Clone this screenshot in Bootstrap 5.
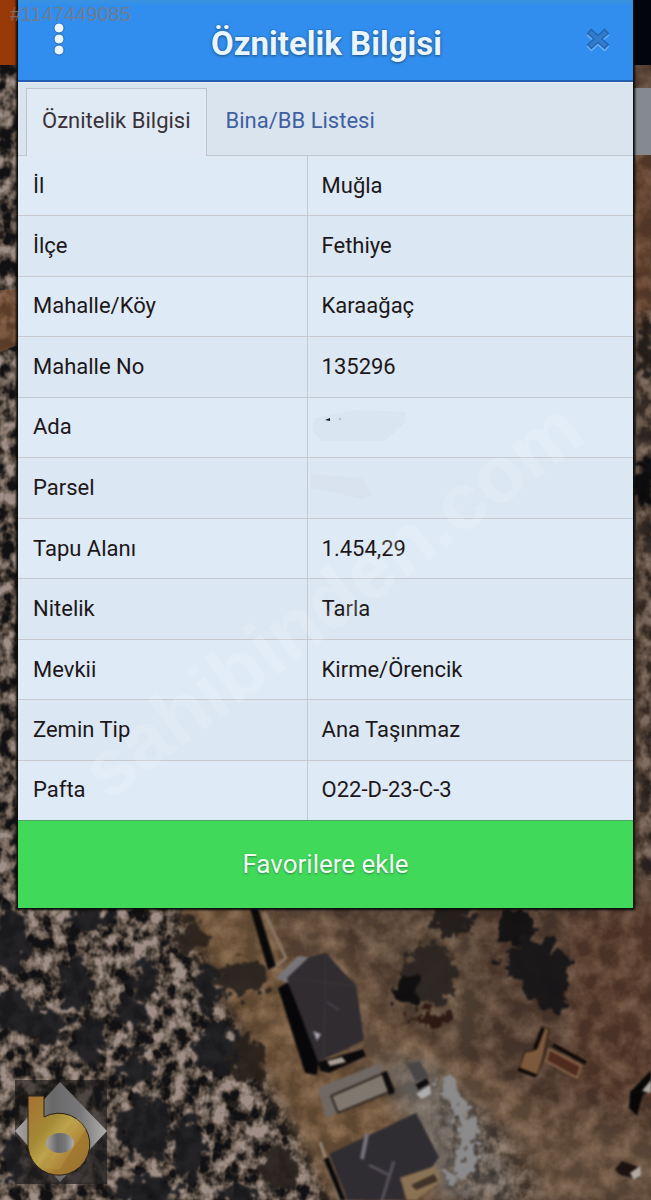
<!DOCTYPE html>
<html lang="tr">
<head>
<meta charset="utf-8">
<meta name="viewport" content="width=device-width, initial-scale=1">
<title>Öznitelik Bilgisi</title>
<link rel="stylesheet" href="https://cdn.jsdelivr.net/npm/bootstrap@5.3.0/dist/css/bootstrap.min.css">
<style>
  body { font-family: Roboto, sans-serif; font-size: 22px; line-height: 28px; background: #4f3d32; color: #1d1719; }
  .stage { min-height: 100vh; padding: 0 18px; overflow: hidden; }
  .terrain { position: absolute; inset: 0; width: 100%; height: 100%; }
  .panel { box-shadow: 0 0 2px 2px #0a0c0a; background: #deeaf6; }
  .panel-head { background: linear-gradient(#3b93dd 0, #318eee 6px); border-bottom: 2px solid #245fae; height: 82px; padding: 4px 22px 0 32px; }
  .panel-title { font-size: 33px; line-height: 40px; padding-top: 4px; font-weight: 700; color: #e9f6ff; text-shadow: 0 0 2px #24588f, 0 1px 3px #24588f; }
  .icon-btn { background: none; border: 0; padding: 0; line-height: 0; }
  .panel-tabs { background: #d9e4ef; border-bottom: 1px solid #bfc7d0; padding: 5px 8px 0; height: 74px; border-top: 1px solid #e8edf5; }
  .panel-tabs .nav-link { border-radius: 0; color: #3f5f9f; padding: 19px 16px 20px 19px; border: 0; line-height: 28px; }
  .panel-tabs .nav-link.active { background: #e0eaf5; color: #3a3238; padding: 18px 15px 21px; border: solid #bcc5ce; border-width: 1px 1px 0; }
  .facts { height: 664px; table-layout: fixed; }
  .facts th, .facts td { font-weight: 400; padding: 0 14px; vertical-align: middle; border-bottom: 1px solid #c6c9d0; }
  .facts th { width: 47%; padding-left: 15px; }
  .facts td { border-left: 1px solid #c6c9d0; }
  .facts tr:nth-child(even) { background: #dbe7f3; }
  .facts tr:last-child > * { border-bottom: 0; }
  .fav { background: #40d95a; color: #effff0; border: 0; border-top: 1px solid #4ba566; height: 88px; font-size: 26px; padding-bottom: 3px; text-shadow: 0 1px 2px #38834a; }
  .overlay-art { position: absolute; inset: 0; width: 100%; height: 100%; pointer-events: none; }
  .ad-no { position: absolute; left: 10px; top: 1px; font: 20px/26px "Liberation Sans", sans-serif; color: rgba(128, 119, 117, .8); }
</style>
</head>
<body>
<main class="stage position-relative">
  <svg class="terrain" viewBox="0 0 651 1200" preserveAspectRatio="xMidYMin slice" aria-hidden="true">
    <defs>
      <filter id="rocks" x="0" y="0" width="100%" height="100%" color-interpolation-filters="sRGB">
        <feTurbulence type="fractalNoise" baseFrequency=".075 .065" numOctaves="3" seed="12"/>
        <feColorMatrix values="2.6 0 0 0 -.82  2.6 0 0 0 -.82  2.6 0 0 0 -.82  0 0 0 0 1"/>
        <feComponentTransfer result="n">
          <feFuncR type="table" tableValues=".07 .15 .29 .42 .52 .62"/>
          <feFuncG type="table" tableValues=".07 .13 .25 .37 .46 .56"/>
          <feFuncB type="table" tableValues=".08 .12 .22 .33 .42 .53"/>
        </feComponentTransfer>
        <feGaussianBlur in="SourceAlpha" stdDeviation="8" result="a"/>
        <feComposite in="n" in2="a" operator="in"/>
      </filter>
      <filter id="grain" x="0" y="0" width="100%" height="100%" color-interpolation-filters="sRGB">
        <feTurbulence type="fractalNoise" baseFrequency=".05" numOctaves="4" seed="5"/>
        <feColorMatrix values="1.8 0 0 0 -.55  1.6 0 0 0 -.53  1.4 0 0 0 -.5  0 0 0 0 .2"/>
      </filter>
      <filter id="rough" x="-20%" y="-20%" width="140%" height="140%" color-interpolation-filters="sRGB">
        <feTurbulence type="fractalNoise" baseFrequency=".09" numOctaves="3" seed="3"/>
        <feDisplacementMap in="SourceGraphic" scale="32" xChannelSelector="R" yChannelSelector="G"/>
        <feGaussianBlur stdDeviation="1.2"/>
      </filter>
      <filter id="soft" color-interpolation-filters="sRGB"><feGaussianBlur stdDeviation="9"/></filter>
      <filter id="edge" color-interpolation-filters="sRGB"><feGaussianBlur stdDeviation=".8"/></filter>
    </defs>
    <rect width="651" height="1200" fill="#554034"/>
    <g filter="url(#soft)">
      <path d="M630 150h21v180h-21z" fill="#6f4732"/>
      <path d="M160 890h100l80 160 130 150H300L240 1040z" fill="#765a3f"/>
      <path d="M305 890l80 130 90 50 100 60 90 10v60H500l-90-80-60-50-70-170z" fill="#6e5745"/>
      <path d="M340 900l130 0 20 90-20 60-60-30z" fill="#5f4c3d"/>
      <path d="M570 920l90-20v210l-90-20z" fill="#5c3f31"/>
      <path d="M380 1060l50 0 60 70 30 70H440z" fill="#77716b"/>
    </g>
    <path d="M312 905l72 112 82 60 80 40 105 16" fill="none" stroke="#84684d" stroke-width="14" opacity=".4" filter="url(#soft)"/>
    <rect width="651" height="1200" filter="url(#grain)"/>
    <path d="M-30-30H30V880H165l38 80 52 100 40 70 50 100H-30z" filter="url(#rocks)"/>
    <path d="M636 310h40v570h-40z" filter="url(#rocks)" opacity=".6"/>
    <path d="M430 1090l45 10 45 45 30 60h-90z" filter="url(#rocks)" opacity=".45"/>
    <path d="M0 290h18v55L0 352z" fill="#7a4e31" opacity=".7"/>
    <g filter="url(#rough)" fill="#1b1b1e" opacity=".92">
      <ellipse cx="12" cy="940" rx="17" ry="32"/><ellipse cx="12" cy="1010" rx="20" ry="22"/>
      <ellipse cx="75" cy="985" rx="14" ry="27"/><ellipse cx="42" cy="1027" rx="24" ry="17"/>
      <ellipse cx="90" cy="1040" rx="16" ry="24"/><ellipse cx="130" cy="1012" rx="18" ry="15"/>
      <ellipse cx="144" cy="980" rx="13" ry="20"/><ellipse cx="136" cy="1070" rx="18" ry="16"/>
      <ellipse cx="145" cy="1128" rx="26" ry="32"/><ellipse cx="188" cy="1148" rx="18" ry="30"/>
      <ellipse cx="145" cy="1190" rx="35" ry="15"/><ellipse cx="208" cy="988" rx="14" ry="26"/>
      <ellipse cx="244" cy="978" rx="24" ry="19" fill="#29231f"/><ellipse cx="216" cy="1048" rx="22" ry="26"/>
      <ellipse cx="248" cy="1060" rx="17" ry="24" fill="#28201a"/><ellipse cx="277" cy="1168" rx="19" ry="22" fill="#28221e"/>
      <ellipse cx="240" cy="1195" rx="20" ry="10"/><ellipse cx="12" cy="1160" rx="10" ry="23"/>
      <ellipse cx="192" cy="938" rx="13" ry="20" fill="#2b221c"/><ellipse cx="90" cy="918" rx="24" ry="12"/>
      <ellipse cx="430" cy="975" rx="27" ry="32" fill="#2a2421"/><ellipse cx="408" cy="990" rx="13" ry="16" fill="#0b0b0d"/>
      <ellipse cx="430" cy="1019" rx="19" ry="7" fill="#2a1610"/>
      <ellipse cx="452" cy="920" rx="22" ry="16" fill="#201c1a"/><ellipse cx="516" cy="926" rx="21" ry="17" fill="#0f0f10"/>
      <path d="M502 957l30-24 30 16 10 32-8 32-22-2-20-26-18-14z" fill="#151417"/>
      <ellipse cx="647" cy="485" rx="12" ry="26" fill="#08090b"/><ellipse cx="646" cy="350" rx="9" ry="30" fill="#211b18"/>
    </g>
    <g filter="url(#edge)">
      <path d="M250 908h8l18 58-8 4z" fill="#0a090a"/>
      <path d="M264 912l22 46-10 8" fill="none" stroke="#8a7765" stroke-width="3"/>
      <path d="M276 978l22-22 14 2-17 21 4 10z" fill="#77757a"/>
      <path d="M278 988l10-6 31 78-2 15-12-2z" fill="#070709"/>
      <path d="M287 978l22-21 17-4 18 20 12 12 8 55-22 11-24 11z" fill="#302c30"/>
      <path d="M326 956l-2 108M287 978l69 8" stroke="#3b373b" stroke-width="1" fill="none"/>
      <path d="M313 1031l8 3-4 7zM327 1002l12 8" fill="#aaa8b4" stroke="#625a65"/>
      <path d="M318 1062l45-13 3 7-37 17-9-2z" fill="#0c090a"/>
      <path d="M327 1061l15-4 4 5-16 4z" fill="#aaa096"/>
      <path d="M318 1088l62-25 14 26-68 29z" fill="#706963"/>
      <path d="M331 1096l55-24 8 18-56 23z" fill="#80776e" stroke="#302822" stroke-width="2"/>
      <path d="M384 1072l8 22M417 1087l11-6" stroke="#0d0b0b" stroke-width="6"/>
      <path d="M406 1064l14-3 9 16-13 5z" fill="#494646"/>
      <path d="M416 1094l14-9 1 9-9 5z" fill="#b0afb0"/>
      <path d="M329 1154l87-41 23 44-8 12-30 8 4 23h-58z" fill="#302d32"/>
      <path d="M367 1134l-5 25" stroke="#77747e" stroke-width="4"/>
      <path d="M369 1165l20 10M394 1161l-12 39" stroke="#56515a" stroke-width="3"/>
      <path d="M320 1142l20 58" stroke="#968979" stroke-width="3"/>
      <path d="M326 1158l17 42" stroke="#09090a" stroke-width="5"/>
      <path d="M400 1178l35-12 6 15-25 19h-9z" fill="#8a7254"/>
      <path d="M411 1185l23-11 4 7-22 9z" fill="#413328"/>
      <path d="M542 1026l7 3-6 29-6 18-19-5 7-19 10-2z" fill="#7c593c" stroke="#16100c" stroke-width="1"/>
      <path d="M518 1069l18 7M543 1028l-8 21M553 1045l33 18" stroke="#0d0806" stroke-width="4"/>
      <path d="M549 1049l32 17-4 12-31-17z" fill="#4f2a1e" stroke="#87664c" stroke-width="2"/>
      <path d="M651 1070l-21 22-1 16 8 8 6-21 8-6z" fill="#080707"/><path d="M642 1091l9-11v13z" fill="#aaa9a5"/>
      <path d="M615 1169l7-8 17 6-1 12-18-4z" fill="#1c1210"/><path d="M630 1173l10-7 1 9-7 5z" fill="#b1aaa2"/>
    </g>
    <g filter="url(#rough)" fill="#8c8b8c">
      <path d="M438 1080l13-2 20 36-14 8zM458 1122l17-6 5 34-20 33-14-4 16-27z"/>
    </g>
    <path d="M0 0h18v65H0z" fill="#983908"/><path d="M633 0h18v65h-18z" fill="#02050c"/>
    <path d="M633 88h18v67h-18z" fill="#858a90"/>
  </svg>

  <section class="panel position-relative">
    <header class="panel-head d-flex align-items-center justify-content-between">
      <button class="icon-btn" type="button" aria-label="Menü">
        <svg width="18" height="38" viewBox="0 0 18 38"><g fill="#e9f6ff" stroke="#2867ad" stroke-width="1"><circle cx="9" cy="5" r="5"/><circle cx="9" cy="16" r="5"/><circle cx="9" cy="27" r="5"/></g></svg>
      </button>
      <h1 class="panel-title m-0">Öznitelik Bilgisi</h1>
      <button class="icon-btn" type="button" aria-label="Kapat">
        <svg width="26" height="30" viewBox="0 0 26 30"><g fill="none"><path d="M4 6l18 16M22 6L4 22" stroke="#6cb2f4" stroke-width="7"/><path d="M4 4l18 16M22 4L4 20" stroke="#2465b3" stroke-width="7"/><path d="M5 5l16 14M21 5L5 19" stroke="#307bcc" stroke-width="4"/></g></svg>
      </button>
    </header>
    <nav class="panel-tabs nav nav-tabs flex-nowrap">
      <a class="nav-link active" href="#bilgi" aria-current="page">Öznitelik Bilgisi</a>
      <a class="nav-link" href="#liste">Bina/BB Listesi</a>
    </nav>
    <table class="facts w-100" id="bilgi">
      <tbody>
        <tr><th scope="row">İl</th><td>Muğla</td></tr>
        <tr><th scope="row">İlçe</th><td>Fethiye</td></tr>
        <tr><th scope="row">Mahalle/Köy</th><td>Karaağaç</td></tr>
        <tr><th scope="row">Mahalle No</th><td>135296</td></tr>
        <tr><th scope="row">Ada</th><td></td></tr>
        <tr><th scope="row">Parsel</th><td></td></tr>
        <tr><th scope="row">Tapu Alanı</th><td>1.454,29</td></tr>
        <tr><th scope="row">Nitelik</th><td>Tarla</td></tr>
        <tr><th scope="row">Mevkii</th><td>Kirme/Örencik</td></tr>
        <tr><th scope="row">Zemin Tip</th><td>Ana Taşınmaz</td></tr>
        <tr><th scope="row">Pafta</th><td>O22-D-23-C-3</td></tr>
      </tbody>
    </table>
    <button class="fav w-100 d-block" type="button">Favorilere ekle</button>
  </section>

  <svg class="overlay-art" viewBox="0 0 651 1200" preserveAspectRatio="xMidYMin slice">
    <defs>
      <linearGradient id="gold" x1="0" y1="0" x2="1" y2="1"><stop offset="0" stop-color="#a66f32"/><stop offset=".35" stop-color="#a48a35"/><stop offset=".5" stop-color="#bda34b"/><stop offset=".7" stop-color="#a47a31"/><stop offset="1" stop-color="#93712e"/></linearGradient>
      <linearGradient id="steel" x1="0" x2="1"><stop offset="0" stop-color="#aaa5a2"/><stop offset=".4" stop-color="#686869"/><stop offset=".7" stop-color="#77777a"/><stop offset="1" stop-color="#b1adab"/></linearGradient>
    </defs>
    <path d="M315 418l40-8 50 2v10l-20 19h-63l-10-11zM311 474l50 4 12 17-12 4-28-7-22-4z" fill="#d6e1ec" opacity=".6"/>
    <path d="M325 420l5-2v3z" fill="#15171a"/><circle cx="340" cy="419" r="1" fill="#a8b3ba"/>
    <text transform="translate(108 802) rotate(-37)" font-family="Liberation Sans, sans-serif" font-weight="700" font-size="79" fill="#fff" opacity=".16">sahibinden.com</text>
    <path d="M15 1080h92v104H15z" fill="#171516" opacity=".6"/>
    <path d="M60 1082l47 49-47 51-45-51z" fill="url(#steel)"/>
    <path d="M28 1148l32 34-45-40v42h92v-53l-18 19-29 32z" fill="#29272a" opacity=".35"/>
    <path d="M28 1096h16v21a31 31 0 1 1-16 24z" fill="url(#gold)" stroke="#292116"/>
    <path d="M44 1168l34-51 8 12-27 41z" fill="#d1b75d" opacity=".2"/>
    <ellipse cx="60" cy="1143" rx="14" ry="10" fill="url(#steel)"/>
  </svg>
  <div class="ad-no">#1147449085</div>
</main>
<script src="https://cdn.jsdelivr.net/npm/bootstrap@5.3.0/dist/js/bootstrap.bundle.min.js"></script>
</body>
</html>
